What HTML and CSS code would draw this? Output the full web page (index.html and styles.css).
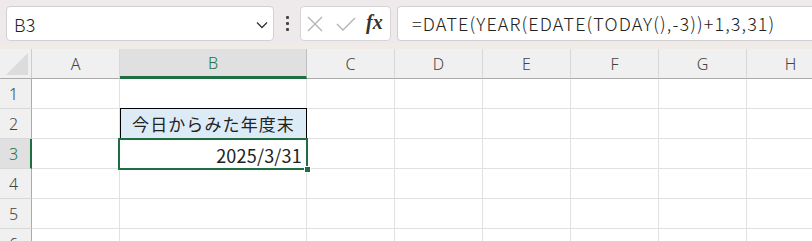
FILE: index.html
```html
<!DOCTYPE html>
<html lang="ja">
<head>
<meta charset="utf-8">
<link rel="stylesheet" href="styles.css">
</head>
<body>
<div class="toolbar">
  <div class="namebox">
    <span class="name">B3</span>
    <svg class="chev" width="12" height="8" viewBox="0 0 12 8"><path d="M1 1.5 L6 6.5 L11 1.5" fill="none" stroke="#333" stroke-width="1.3"/></svg>
  </div>
  <div class="dots"><i></i><i></i><i></i></div>
  <div class="fxbox">
    <svg width="18" height="18" viewBox="0 0 18 18"><path d="M2 2 L16 16 M16 2 L2 16" stroke="#b4b4b4" stroke-width="1.4" fill="none"/></svg>
    <svg width="22" height="18" viewBox="0 0 22 18"><path d="M2 9 L8 15 L20 3" stroke="#b4b4b4" stroke-width="1.4" fill="none"/></svg>
    <span class="fx">fx</span>
  </div>
  <div class="formula">=DATE(YEAR(EDATE(TODAY(),-3))+1,3,31)</div>
</div>
<div class="strip"></div>
<div class="sheet">
  <div class="grid">
    <div class="corner"><div class="tri"></div></div>
    <div class="ch">A</div>
    <div class="ch sel">B</div>
    <div class="ch">C</div>
    <div class="ch">D</div>
    <div class="ch">E</div>
    <div class="ch">F</div>
    <div class="ch">G</div>
    <div class="ch">H</div>

    <div class="rh">1</div>
    <div class="c"></div><div class="c"></div><div class="c"></div><div class="c"></div><div class="c"></div><div class="c"></div><div class="c"></div><div class="c"></div>

    <div class="rh">2</div>
    <div class="c"></div><div class="c title">今日からみた年度末</div><div class="c"></div><div class="c"></div><div class="c"></div><div class="c"></div><div class="c"></div><div class="c"></div>

    <div class="rh sel">3</div>
    <div class="c"></div><div class="c num">2025/3/31</div><div class="c"></div><div class="c"></div><div class="c"></div><div class="c"></div><div class="c"></div><div class="c"></div>

    <div class="rh">4</div>
    <div class="c"></div><div class="c"></div><div class="c"></div><div class="c"></div><div class="c"></div><div class="c"></div><div class="c"></div><div class="c"></div>

    <div class="rh">5</div>
    <div class="c"></div><div class="c"></div><div class="c"></div><div class="c"></div><div class="c"></div><div class="c"></div><div class="c"></div><div class="c"></div>

    <div class="rh">6</div>
    <div class="c"></div><div class="c"></div><div class="c"></div><div class="c"></div><div class="c"></div><div class="c"></div><div class="c"></div><div class="c"></div>
  </div>
  <div class="selection"><div class="handle"></div></div>
</div>
</body>
</html>
```

FILE: styles.css
```css
* { box-sizing: border-box; }
html, body { margin: 0; padding: 0; }
body {
  width: 812px;
  height: 241px;
  overflow: hidden;
  background: #ffffff;
  font-family: "Noto Sans CJK JP", "Noto Sans", sans-serif;
  color: #222;
}
.toolbar {
  height: 44px;
  background: #eeeaec;
  display: flex;
  align-items: flex-start;
  padding: 6px 0 0 6px;
}
.namebox {
  width: 268px;
  height: 35px;
  background: #fff;
  border: 1px solid #d3d0d2;
  border-radius: 4px;
  display: flex;
  align-items: center;
  justify-content: space-between;
  padding: 0 5px 0 7px;
}
.name { font-size: 18px; color: #222; letter-spacing: 0.3px; font-weight: 300; }
.chev { display: block; margin-top: 2px; }
.dots {
  width: 26px;
  height: 35px;
  display: flex;
  flex-direction: column;
  align-items: center;
  justify-content: center;
  gap: 3px;
}
.dots i {
  display: block;
  width: 3px;
  height: 3px;
  background: #444;
  border-radius: 1px;
}
.fxbox {
  width: 91px;
  height: 35px;
  background: #fff;
  border: 1px solid #d8d4d6;
  border-radius: 4px;
  display: flex;
  align-items: center;
  padding: 0 0 0 5px;
  gap: 11px;
}
.fxbox svg { display: block; }
.fx {
  font-family: "Liberation Serif", serif;
  font-style: italic;
  font-weight: bold;
  font-size: 20px;
  color: #333;
  margin-left: -2px;
  margin-top: -3px;
}
.formula {
  flex: 1;
  margin-left: 6px;
  height: 35px;
  background: #fff;
  border: 1px solid #d3d0d2;
  border-right: none;
  border-radius: 4px 0 0 4px;
  font-size: 18px;
  letter-spacing: 1.1px;
  line-height: 32px;
  padding-left: 14px;
  color: #222;
  white-space: nowrap;
  font-weight: 300;
}
.strip { height: 5px; background: #f0ebe7; }
.sheet { position: relative; }
.grid {
  display: grid;
  grid-template-columns: 32px 88px 187px 88px 88px 88px 88px 88px 88px;
  grid-template-rows: 30px repeat(6, 30px);
}
.corner {
  background: #f0f0f0;
  border-right: 1px solid #cdcdcd;
  border-bottom: 1px solid #ababab;
  position: relative;
}
.tri {
  position: absolute;
  right: 3px;
  bottom: 3px;
  width: 0;
  height: 0;
  border-left: 22px solid transparent;
  border-bottom: 22px solid #dcdcdc;
}
.ch {
  background: #f0f0f0;
  border-right: 1px solid #d8d8d8;
  border-bottom: 1px solid #ababab;
  font-size: 16px;
  color: #444;
  display: flex;
  align-items: center;
  justify-content: center;
  font-family: "Noto Sans", sans-serif;
  font-weight: 300;
}
.ch.sel {
  background: #e0e0e0;
  color: #217346;
  border-bottom: 3px solid #1e6e42;
  border-right-color: #bfbfbf;
}
.rh {
  background: #f0f0f0;
  border-right: 1px solid #ababab;
  border-bottom: 1px solid #d8d8d8;
  font-size: 16px;
  color: #444;
  display: flex;
  align-items: center;
  padding-left: 9px;
  font-family: "Noto Sans", sans-serif;
  font-weight: 300;
}
.rh.sel {
  background: #e0e0e0;
  color: #217346;
  border-right: 2px solid #1e6e42;
}
.c {
  border-right: 1px solid #e1e1e1;
  border-bottom: 1px solid #e1e1e1;
  font-size: 17px;
  display: flex;
  align-items: center;
}
.title {
  background: #ddebf7;
  outline: 1px solid #000;
  outline-offset: -1px;
  justify-content: center;
  color: #222;
  position: relative;
  top: -1px;
  height: 31px;
  letter-spacing: 1.1px;
  padding-left: 1px;
}
.num {
  justify-content: flex-end;
  padding-right: 4px;
  color: #222;
  padding-top: 2px;
  font-size: 18px;
  letter-spacing: 0.2px;
}
.selection {
  position: absolute;
  left: 118px;
  top: 89px;
  width: 190px;
  height: 32px;
  border: 2px solid #1e6e42;
  pointer-events: none;
}
.handle {
  position: absolute;
  right: -5px;
  bottom: -5px;
  width: 7px;
  height: 7px;
  background: #1e6e42;
  border: 1px solid #fff;
}
```
